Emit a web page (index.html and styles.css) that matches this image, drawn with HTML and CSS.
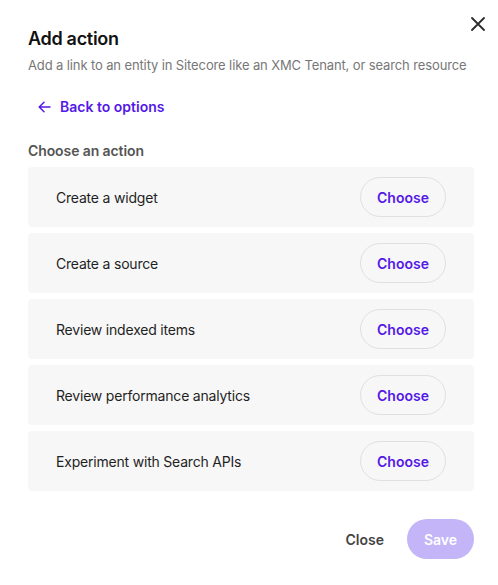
FILE: index.html
```html
<!DOCTYPE html>
<html>
<head>
  <meta charset="utf-8">
  <title>Add action</title>
  <link rel="stylesheet" href="styles.css">
</head>
<body>
  <div class="dialog">
    <button class="close-x" aria-label="Close">
      <svg width="14" height="14" viewBox="0 0 14 14"><path d="M1 1L13 13M13 1L1 13" stroke="#2b2b2b" stroke-width="1.8" stroke-linecap="round"/></svg>
    </button>
    <h1 class="title">Add action</h1>
    <p class="subtitle">Add a link to an entity in Sitecore like an XMC Tenant, or search resource</p>

    <a class="back" href="#">
      <svg width="13" height="12" viewBox="0 0 13 12"><path d="M12 6H1.5M6 1.2L1.2 6L6 10.8" fill="none" stroke="#5419e6" stroke-width="1.5" stroke-linecap="round" stroke-linejoin="round"/></svg>
      Back to options
    </a>

    <h2 class="section">Choose an action</h2>
    <ul class="actions">
      <li class="action"><span>Create a widget</span><button class="choose">Choose</button></li>
      <li class="action"><span>Create a source</span><button class="choose">Choose</button></li>
      <li class="action"><span>Review indexed items</span><button class="choose">Choose</button></li>
      <li class="action"><span>Review performance analytics</span><button class="choose">Choose</button></li>
      <li class="action"><span>Experiment with Search APIs</span><button class="choose">Choose</button></li>
    </ul>

    <div class="footer">
      <button class="btn-close">Close</button>
      <button class="btn-save" disabled>Save</button>
    </div>
  </div>
</body>
</html>
```

FILE: styles.css
```css
body {
  margin: 0;
  font-family: Inter, "Noto Sans", sans-serif;
  color: #1f1f1f;
  background: #fff;
}
button { font-family: inherit; cursor: pointer }
.dialog {
  position: relative;
  padding: 27px 24px 0 28px;
}
.close-x {
  position: absolute;
  top: 17px; right: 13px;
  background: none; border: 0; padding: 0;
  width: 14px; height: 14px;
  display: flex;
}
.title {
  margin: 0;
  font-size: 18px;
  font-weight: 600;
  line-height: 24px;
  letter-spacing: -0.3px;
  color: #111;
}
.subtitle {
  margin: 4px 0 0;
  font-size: 13px;
  line-height: 20px;
  letter-spacing: -0.12px;
  white-space: nowrap;
  color: #777;
}
.back {
  display: inline-flex;
  align-items: center;
  gap: 9px;
  margin: 22px 0 0 10px;
  font-size: 14px;
  font-weight: 600;
  line-height: 20px;
  color: #5419e6;
  text-decoration: none;
}
.section {
  margin: 24px 0 6px;
  font-size: 14px;
  font-weight: 600;
  line-height: 20px;
  letter-spacing: -0.1px;
  color: #555;
}
.actions {
  list-style: none;
  margin: 0; padding: 0;
  display: flex;
  flex-direction: column;
  gap: 6px;
}
.action {
  display: flex;
  align-items: center;
  justify-content: space-between;
  height: 60px;
  padding: 0 28px;
  background: #f7f7f7;
  border-radius: 4px;
  font-size: 14px;
  letter-spacing: -0.2px;
  color: #1f1f1f;
}
.choose {
  height: 40px;
  padding: 0 16px;
  width: 86px;
  border: 1px solid #e0e0e0;
  border-radius: 20px;
  background: #f7f7f7;
  color: #5419e6;
  font-size: 14px;
  font-weight: 600;
}
.footer {
  display: flex;
  justify-content: flex-end;
  align-items: center;
  gap: 14px;
  margin-top: 28px;
}
.btn-close {
  background: none; border: 0;
  height: 40px; padding: 0 9px;
  font-size: 14px; font-weight: 600;
  color: #444;
}
.btn-save {
  height: 40px; width: 67px;
  border: 0; border-radius: 20px;
  background: #c3b5f8;
  color: #fff;
  font-size: 14px; font-weight: 600;
}
```
